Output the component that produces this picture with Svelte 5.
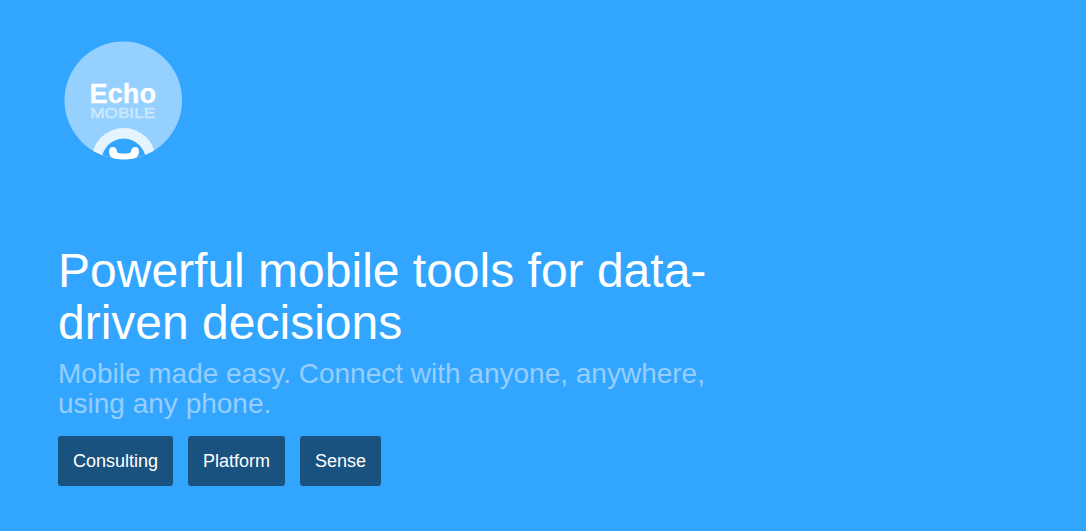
<script>
	const links = ['Consulting', 'Platform', 'Sense'];
</script>

<main class="hero">
	<svg class="logo" width="130" height="130" viewBox="58 35 130 130" role="img" aria-label="Echo Mobile">
		<defs>
			<clipPath id="disc">
				<circle cx="123.3" cy="100.3" r="58.8" />
			</clipPath>
		</defs>
		<circle cx="123.3" cy="100.3" r="58.8" fill="#96d0ff" />
		<g clip-path="url(#disc)">
			<circle cx="123.7" cy="160" r="32" fill="#e6f4ff" />
			<circle cx="123.7" cy="160.5" r="22" fill="#32a5ff" />
		</g>
		<!-- handset -->
		<path
			d="M109 151.5 Q109 147 112.7 147 Q116.3 147 116.8 150.5 Q117 153 119 153.2 Q123.8 153.8 128.8 153.2 Q131 153 131.2 150.5 Q131.7 147 135.3 147 Q139 147 139 151.5 Q139 157 134 158.4 Q124 160.6 114 158.4 Q109 157 109 151.5 Z"
			fill="#fff"
		/>
		<text class="name" x="89.6" y="103.3" textLength="66.4" lengthAdjust="spacingAndGlyphs">Echo</text>
		<text class="kind" x="90.2" y="118" textLength="65" lengthAdjust="spacingAndGlyphs">MOBILE</text>
	</svg>

	<div class="copy">
		<h1>Powerful mobile tools for data-driven decisions</h1>
		<p>Mobile made easy. Connect with anyone, anywhere, using any phone.</p>
		<nav>
			{#each links as link}
				<a href="#{link.toLowerCase()}">{link}</a>
			{/each}
		</nav>
	</div>
</main>

<style>
	:global(body) {
		margin: 0;
		background: #32a5ff;
	}
	.hero {
		box-sizing: border-box;
		height: 531px;
		padding: 35px 58px 0;
		background: #32a5ff;
		color: #fff;
		font-family: 'Liberation Sans', Arial, sans-serif;
	}
	.logo {
		display: block;
	}
	.name {
		fill: #fff;
		stroke: #fff;
		stroke-width: 0.3px;
		font-size: 27.5px;
		font-weight: 700;
	}
	.kind {
		fill: #c8e8ff;
		stroke: #c8e8ff;
		stroke-width: 0.6px;
		font-size: 15px;
	}
	.copy {
		width: 660px;
		margin-top: 80px;
	}
	h1 {
		margin: 0;
		font-size: 48px;
		font-weight: 400;
		line-height: 52px;
	}
	p {
		margin: 10px 0 17px;
		color: #96cfff;
		font-size: 28px;
		line-height: 30px;
	}
	nav {
		display: flex;
		gap: 15px;
	}
	a {
		padding: 0 15px;
		border-radius: 3px;
		background: #1a527f;
		color: #fff;
		font-size: 18px;
		line-height: 50px;
		text-decoration: none;
	}
</style>
